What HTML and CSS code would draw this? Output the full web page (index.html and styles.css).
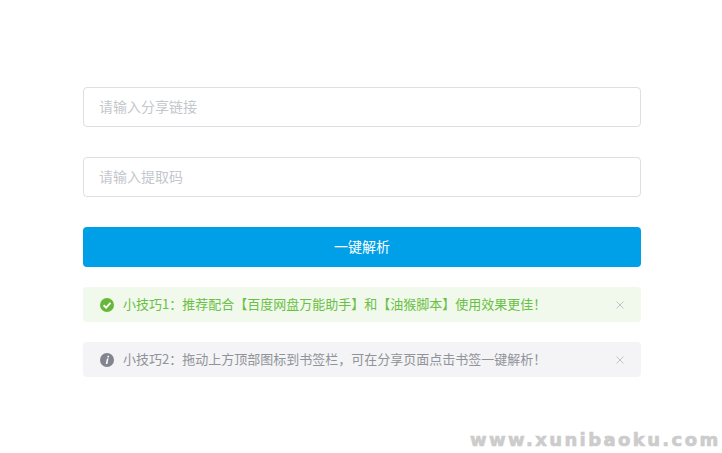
FILE: index.html
```html
<!DOCTYPE html>
<html lang="zh-CN">
<head>
<meta charset="utf-8">
<title>一键解析</title>
<link rel="stylesheet" href="styles.css">
</head>
<body>
<main class="form">
  <div class="field"><span class="placeholder">请输入分享链接</span></div>
  <div class="field"><span class="placeholder">请输入提取码</span></div>
  <button class="submit" type="button"><span class="submit-label">一键解析</span></button>
  <div class="alert alert-success">
    <svg class="alert-icon" viewBox="0 0 14 14" aria-hidden="true"><circle cx="7" cy="7" r="7" fill="#67b83a"/><path d="M3.6 7.2 6.1 9.6 10.5 4.9" fill="none" stroke="#fff" stroke-width="1.9"/></svg>
    <span class="alert-text">小技巧1：推荐配合【百度网盘万能助手】和【油猴脚本】使用效果更佳！</span>
    <svg class="alert-close" viewBox="0 0 8 8" aria-hidden="true"><path d="M.5.5 7.5 7.5M7.5.5.5 7.5" fill="none" stroke="#c0c4cc" stroke-width="1"/></svg>
  </div>
  <div class="alert alert-info">
    <svg class="alert-icon" viewBox="0 0 14 14" aria-hidden="true"><circle cx="7" cy="7" r="7" fill="#82858f"/><path d="M7.6 2.8h1.6l-.3 1.6H7.3zM6.9 5.5h1.6L7.4 11.1H5.8z" fill="#fff"/></svg>
    <span class="alert-text">小技巧2：拖动上方顶部图标到书签栏，可在分享页面点击书签一键解析！</span>
    <svg class="alert-close" viewBox="0 0 8 8" aria-hidden="true"><path d="M.5.5 7.5 7.5M7.5.5.5 7.5" fill="none" stroke="#c0c4cc" stroke-width="1"/></svg>
  </div>
</main>
<div class="watermark">www.xunibaoku.com</div>
</body>
</html>
```
FILE: styles.css
```css
* { box-sizing: border-box; }
html, body { margin: 0; height: 100%; background: #fff; overflow: hidden; }
body {
  position: relative;
  font-family: "Noto Sans CJK SC", "Liberation Sans", sans-serif;
  padding: 87px 81px 0 83px;
}
.form { display: flex; flex-direction: column; }
.field {
  height: 40px;
  margin-bottom: 30px;
  padding: 0 15px;
  display: flex;
  align-items: center;
  border: 1px solid #dcdfe3;
  border-radius: 4px;
  background: #fff;
}
.placeholder { font-size: 14px; color: #c4c7cc; padding-bottom: 2px; }
.submit {
  height: 40px;
  margin-bottom: 20px;
  padding: 0;
  border: 0;
  border-radius: 4px;
  background: #00a0e9;
  color: #fff;
  font-family: inherit;
  font-size: 14px;
}
.submit-label { display: block; padding-bottom: 2px; }
.alert {
  height: 35px;
  margin-bottom: 20px;
  padding: 0 17px;
  display: flex;
  align-items: center;
  border-radius: 4px;
}
.alert-success { background: #f0f9eb; color: #6bbf45; }
.alert-info { background: #f4f4f6; color: #909399; }
.alert-icon { width: 14px; height: 14px; flex: none; margin-right: 9px; }
.alert-text { flex: 1; font-size: 13px; white-space: nowrap; padding-bottom: 2px; }
.alert-close { width: 8px; height: 8px; flex: none; }
.watermark {
  position: absolute;
  left: 470px;
  top: 430px;
  font-family: "DejaVu Sans", sans-serif;
  font-weight: 700;
  font-size: 18px;
  line-height: 20px;
  letter-spacing: 2.4px;
  -webkit-text-stroke: 0.7px #ccc;
  color: #ccc;
  white-space: nowrap;
}
```
